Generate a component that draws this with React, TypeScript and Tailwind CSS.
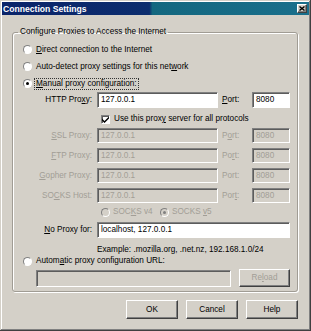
import type { ReactNode } from "react";

const sunken =
  "border border-t-[#808080] border-l-[#808080] border-r-white border-b-white shadow-[inset_1px_1px_0_#5c5c5c]";
const raised =
  "border border-t-white border-l-white border-r-[#404040] border-b-[#404040] shadow-[inset_-1px_-1px_0_#808080]";
const dim = "text-[#a29e96]";

function U({ children }: { children: ReactNode }) {
  return <span className="underline underline-offset-[1px]">{children}</span>;
}

function Radio({ checked, disabled }: { checked?: boolean; disabled?: boolean }) {
  return (
    <span
      className={`w-[9px] h-[9px] shrink-0 rounded-full flex items-center justify-center border border-t-[#808080] border-l-[#808080] border-r-white border-b-white ${
        disabled ? "bg-[#d4d0c8]" : "bg-white"
      }`}
    >
      {checked && (
        <span className={`w-[3px] h-[3px] rounded-full ${disabled ? "bg-[#808080]" : "bg-black"}`} />
      )}
    </span>
  );
}

function Field({ value, width, disabled }: { value: string; width: string; disabled?: boolean }) {
  return (
    <div
      className={`${width} h-full flex items-center pl-[3px] ${sunken} ${
        disabled ? `bg-[#d4d0c8] ${dim}` : "bg-white"
      }`}
    >
      {value}
    </div>
  );
}

function ProxyRow({
  label,
  port,
  disabled,
  className = "h-[15px]",
}: {
  label: ReactNode;
  port: ReactNode;
  disabled?: boolean;
  className?: string;
}) {
  return (
    <div className={`flex items-center ${className}`}>
      <span className={`w-[69px] text-right ${disabled ? dim : ""}`}>{label}</span>
      <div className="ml-[5px] h-full">
        <Field value="127.0.0.1" width="w-[121px]" disabled={disabled} />
      </div>
      <span className={`ml-[4px] w-[30px] ${disabled ? dim : ""}`}>{port}</span>
      <div className="h-full">
        <Field value="8080" width="w-[38px]" disabled={disabled} />
      </div>
    </div>
  );
}

function Button({ children, disabled, width = "w-[52px]" }: { children: ReactNode; disabled?: boolean; width?: string }) {
  return (
    <div
      className={`${width} h-full flex items-center justify-center bg-[#d4d0c8] ${raised} ${
        disabled ? dim : ""
      }`}
    >
      {children}
    </div>
  );
}

export default function App() {
  return (
    <div className="w-[311px] h-[331px] bg-[#d4d0c8] p-[2px] flex flex-col font-['Liberation_Sans',Arial,sans-serif] text-[8.2px] leading-[10px] text-black shadow-[inset_-1px_-1px_0_#404040,inset_1px_1px_0_#d4d0c8,inset_-2px_-2px_0_#808080,inset_2px_2px_0_#ffffff]">
      {/* title bar */}
      <div className="h-[13px] flex items-center justify-between bg-[linear-gradient(to_right,#0a246a,#0c2d6e_48%,#13677f_49%,#1a6f8c)]">
        <span className="pl-[1px] font-bold text-[8.6px] text-white">Connection Settings</span>
        <div className={`mr-[2px] w-[10px] h-[9px] bg-[#d4d0c8] flex items-center justify-center ${raised}`}>
          <svg width="6" height="5" viewBox="0 0 6 5">
            <path d="M0.5 0.5 L5.5 4.5 M5.5 0.5 L0.5 4.5" stroke="#000" strokeWidth="1.4" />
          </svg>
        </div>
      </div>

      <fieldset className="mt-[12px] ml-[10px] mr-[11px] border border-[#a09c94] rounded-[3px] shadow-[1px_1px_0_#fff,inset_1px_1px_0_#fff]">
        <legend className="ml-[5px] px-[2px]">Configure Proxies to Access the Internet</legend>
        <div className="pl-[10px] pt-[4px] pb-[4px] flex flex-col">
          <div className="h-[17px] flex items-center gap-[4px]">
            <Radio />
            <span>
              <U>D</U>irect connection to the Internet
            </span>
          </div>
          <div className="h-[17px] flex items-center gap-[4px]">
            <Radio />
            <span>
              Auto-detect proxy settings for this net<U>w</U>ork
            </span>
          </div>
          <div className="h-[17px] flex items-center gap-[4px]">
            <Radio checked />
            <span className="-ml-[2px] px-[1px] border border-dotted border-[#333]">
              <U>M</U>anual proxy configuration:
            </span>
          </div>

          <ProxyRow
            className="h-[16px]"
            label={
              <>
                HTTP Pro<U>x</U>y:
              </>
            }
            port={
              <>
                <U>P</U>ort:
              </>
            }
          />

          <div className="mt-[3px] h-[16px] flex items-center gap-[4px] pl-[78px]">
            <span className={`w-[9px] h-[9px] bg-white flex items-center justify-center ${sunken}`}>
              <svg width="7" height="7" viewBox="0 0 7 7">
                <path d="M0 2.5 L2.5 5 L7 0.5 L7 2.5 L2.5 7 L0 4.5 Z" fill="#000" />
              </svg>
            </span>
            <span>
              Use this prox<U>y</U> server for all protocols
            </span>
          </div>

          <div className="mt-[1px] flex flex-col gap-[5px]">
            <ProxyRow
              disabled
              label={
                <>
                  <U>S</U>SL Proxy:
                </>
              }
              port={
                <>
                  P<U>o</U>rt:
                </>
              }
            />
            <ProxyRow
              disabled
              label={
                <>
                  <U>F</U>TP Proxy:
                </>
              }
              port={
                <>
                  Po<U>r</U>t:
                </>
              }
            />
            <ProxyRow
              disabled
              label={
                <>
                  <U>G</U>opher Proxy:
                </>
              }
              port="Port:"
            />
            <ProxyRow
              disabled
              label={
                <>
                  SO<U>C</U>KS Host:
                </>
              }
              port={
                <>
                  Por<U>t</U>:
                </>
              }
            />
          </div>

          <div className={`mt-[1px] h-[16px] flex items-center pl-[78px] ${dim}`}>
            <div className="w-[59px] flex items-center gap-[3px]">
              <Radio disabled />
              <span>
                SOC<U>K</U>S v4
              </span>
            </div>
            <div className="flex items-center gap-[3px]">
              <Radio checked disabled />
              <span>
                SOCKS <U>v</U>5
              </span>
            </div>
          </div>

          <div className="mt-[2px] h-[16px] flex items-center">
            <span className="w-[69px] text-right">
              <U>N</U>o Proxy for:
            </span>
            <div className="ml-[5px] h-full">
              <Field value="localhost, 127.0.0.1" width="w-[193px]" />
            </div>
          </div>

          <div className="mt-[7px] h-[10px] flex items-center pl-[74px]">
            Example: .mozilla.org, .net.nz, 192.168.1.0/24
          </div>

          <div className="mt-[1px] h-[10px] flex items-center gap-[4px]">
            <Radio />
            <span>
              Autom<U>a</U>tic proxy configuration URL:
            </span>
          </div>

          <div className="mt-[3px] h-[18px] flex items-center">
            <div className="ml-[13px] h-[17px]">
              <Field value="" width="w-[195px]" disabled />
            </div>
            <div className="ml-[8px] h-full">
              <Button disabled width="w-[51px]">
                Re<U>l</U>oad
              </Button>
            </div>
          </div>
        </div>
      </fieldset>

      <div className="mt-[8px] mr-[11px] h-[19px] flex justify-end gap-[8px]">
        <Button>OK</Button>
        <Button>Cancel</Button>
        <Button>Help</Button>
      </div>
    </div>
  );
}
